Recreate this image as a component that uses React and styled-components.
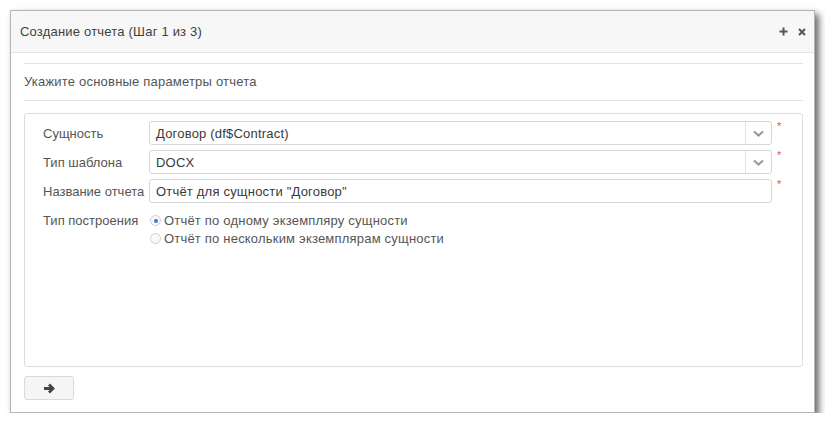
import React from "react";
import styled, { createGlobalStyle } from "styled-components";

const GlobalStyle = createGlobalStyle`
  html, body {
    margin: 0;
    padding: 0;
    background: #ffffff;
  }
  body {
    font-family: "Liberation Sans", Arial, sans-serif;
    font-size: 13px;
    letter-spacing: 0.2px;
    color: #333;
  }
`;

const Page = styled.div`
  padding: 10px 0 0 10px;
`;

const Window = styled.div`
  width: 805px;
  height: 403px;
  box-sizing: border-box;
  background: #fff;
  border: 1px solid #b5b5b5;
  box-shadow: 4px 4px 7px rgba(0, 0, 0, 0.6);
  display: flex;
  flex-direction: column;
`;

const Header = styled.div`
  height: 41px;
  flex: none;
  background: #f7f7f7;
  border-bottom: 1px solid #e3e3e3;
  display: flex;
  align-items: center;
  justify-content: space-between;
  padding: 0 8px 0 9px;
`;

const Title = styled.div`
  color: #404040;
`;

const Tools = styled.div`
  display: flex;
  align-items: center;
  gap: 10px;
`;

const Body = styled.div`
  flex: 1;
  display: flex;
  flex-direction: column;
  padding: 10px 11px 12px 13px;
`;

const Rule = styled.div`
  height: 1px;
  background: #e2e2e2;
`;

const Subtitle = styled.div`
  height: 36px;
  line-height: 36px;
  color: #555;
`;

const Fieldset = styled.div`
  margin-top: 12px;
  height: 254px;
  box-sizing: border-box;
  border: 1px solid #dcdcdc;
  border-radius: 3px;
  padding: 7px 0 0 18px;
  display: flex;
  flex-direction: column;
  gap: 5px;
`;

const Row = styled.div`
  display: flex;
  align-items: ${(p) => (p.top ? "flex-start" : "center")};
  margin-top: ${(p) => (p.top ? "5px" : "0")};
`;

const Label = styled.div`
  width: 106px;
  flex: none;
  white-space: nowrap;
  letter-spacing: 0;
  color: #555;
`;

const Field = styled.div`
  width: 623px;
  height: 24px;
  box-sizing: border-box;
  border: 1px solid #d6d6d6;
  border-radius: 3px;
  display: flex;
  align-items: center;
  background: #fff;
`;

const FieldText = styled.div`
  flex: 1;
  padding-left: 6px;
  color: #3a3a3a;
`;

const DropButton = styled.div`
  width: 25px;
  height: 100%;
  border-left: 1px solid #e2e2e2;
  display: flex;
  align-items: center;
  justify-content: center;
`;

const Required = styled.span`
  align-self: flex-start;
  color: #e8504a;
  font-size: 11px;
  margin-left: 5px;
  margin-top: -1px;
`;

const RadioList = styled.div`
  display: flex;
  flex-direction: column;
  gap: 3px;
  padding-left: 1px;
`;

const RadioItem = styled.div`
  display: flex;
  align-items: center;
  gap: 3px;
  color: #555;
  height: 15px;
`;

const RadioCircle = styled.span`
  width: 11px;
  height: 11px;
  box-sizing: border-box;
  border-radius: 50%;
  border: 1px solid #cfcfcf;
  background: #fafafa;
  display: flex;
  align-items: center;
  justify-content: center;
  &::after {
    content: "";
    width: 4px;
    height: 4px;
    border-radius: 50%;
    background: ${(p) => (p.checked ? "#3a7bd5" : "transparent")};
  }
`;

const Footer = styled.div`
  margin-top: 9px;
`;

const NextButton = styled.button`
  width: 50px;
  height: 24px;
  box-sizing: border-box;
  background: #f5f5f5;
  border: 1px solid #dadada;
  border-radius: 3px;
  display: flex;
  align-items: center;
  justify-content: center;
  padding: 0;
`;

const Chevron = () => (
  <svg width="11" height="7" viewBox="0 0 11 7">
    <path d="M1 1.5 L5.5 5.5 L10 1.5" fill="none" stroke="#9a9a9a" strokeWidth="2.2" />
  </svg>
);

const PlusIcon = () => (
  <svg width="9" height="9" viewBox="0 0 9 9">
    <path d="M4.5 0.5 V8.5 M0.5 4.5 H8.5" stroke="#555" strokeWidth="2" />
  </svg>
);

const CloseIcon = () => (
  <svg width="8" height="8" viewBox="0 0 8 8">
    <path d="M1 1 L7 7 M7 1 L1 7" stroke="#555" strokeWidth="2" />
  </svg>
);

const ArrowIcon = () => (
  <svg width="12" height="11" viewBox="0 0 12 11">
    <path d="M1 5.5 H9.5 M6 1.5 L10 5.5 L6 9.5" fill="none" stroke="#444" strokeWidth="2.8" />
  </svg>
);

function SelectRow({ label, value, select }) {
  return (
    <Row>
      <Label>{label}</Label>
      <Field>
        <FieldText>{value}</FieldText>
        {select && (
          <DropButton>
            <Chevron />
          </DropButton>
        )}
      </Field>
      <Required>*</Required>
    </Row>
  );
}

export default function App() {
  return (
    <>
      <GlobalStyle />
      <Page>
        <Window>
          <Header>
            <Title>Создание отчета (Шаг 1 из 3)</Title>
            <Tools>
              <PlusIcon />
              <CloseIcon />
            </Tools>
          </Header>
          <Body>
            <Rule />
            <Subtitle>Укажите основные параметры отчета</Subtitle>
            <Rule />
            <Fieldset>
              <SelectRow label="Сущность" value="Договор (df$Contract)" select />
              <SelectRow label="Тип шаблона" value="DOCX" select />
              <SelectRow label="Название отчета" value={'Отчёт для сущности "Договор"'} />
              <Row top>
                <Label>Тип построения</Label>
                <RadioList>
                  <RadioItem>
                    <RadioCircle checked />
                    Отчёт по одному экземпляру сущности
                  </RadioItem>
                  <RadioItem>
                    <RadioCircle />
                    Отчёт по нескольким экземплярам сущности
                  </RadioItem>
                </RadioList>
              </Row>
            </Fieldset>
            <Footer>
              <NextButton>
                <ArrowIcon />
              </NextButton>
            </Footer>
          </Body>
        </Window>
      </Page>
    </>
  );
}
